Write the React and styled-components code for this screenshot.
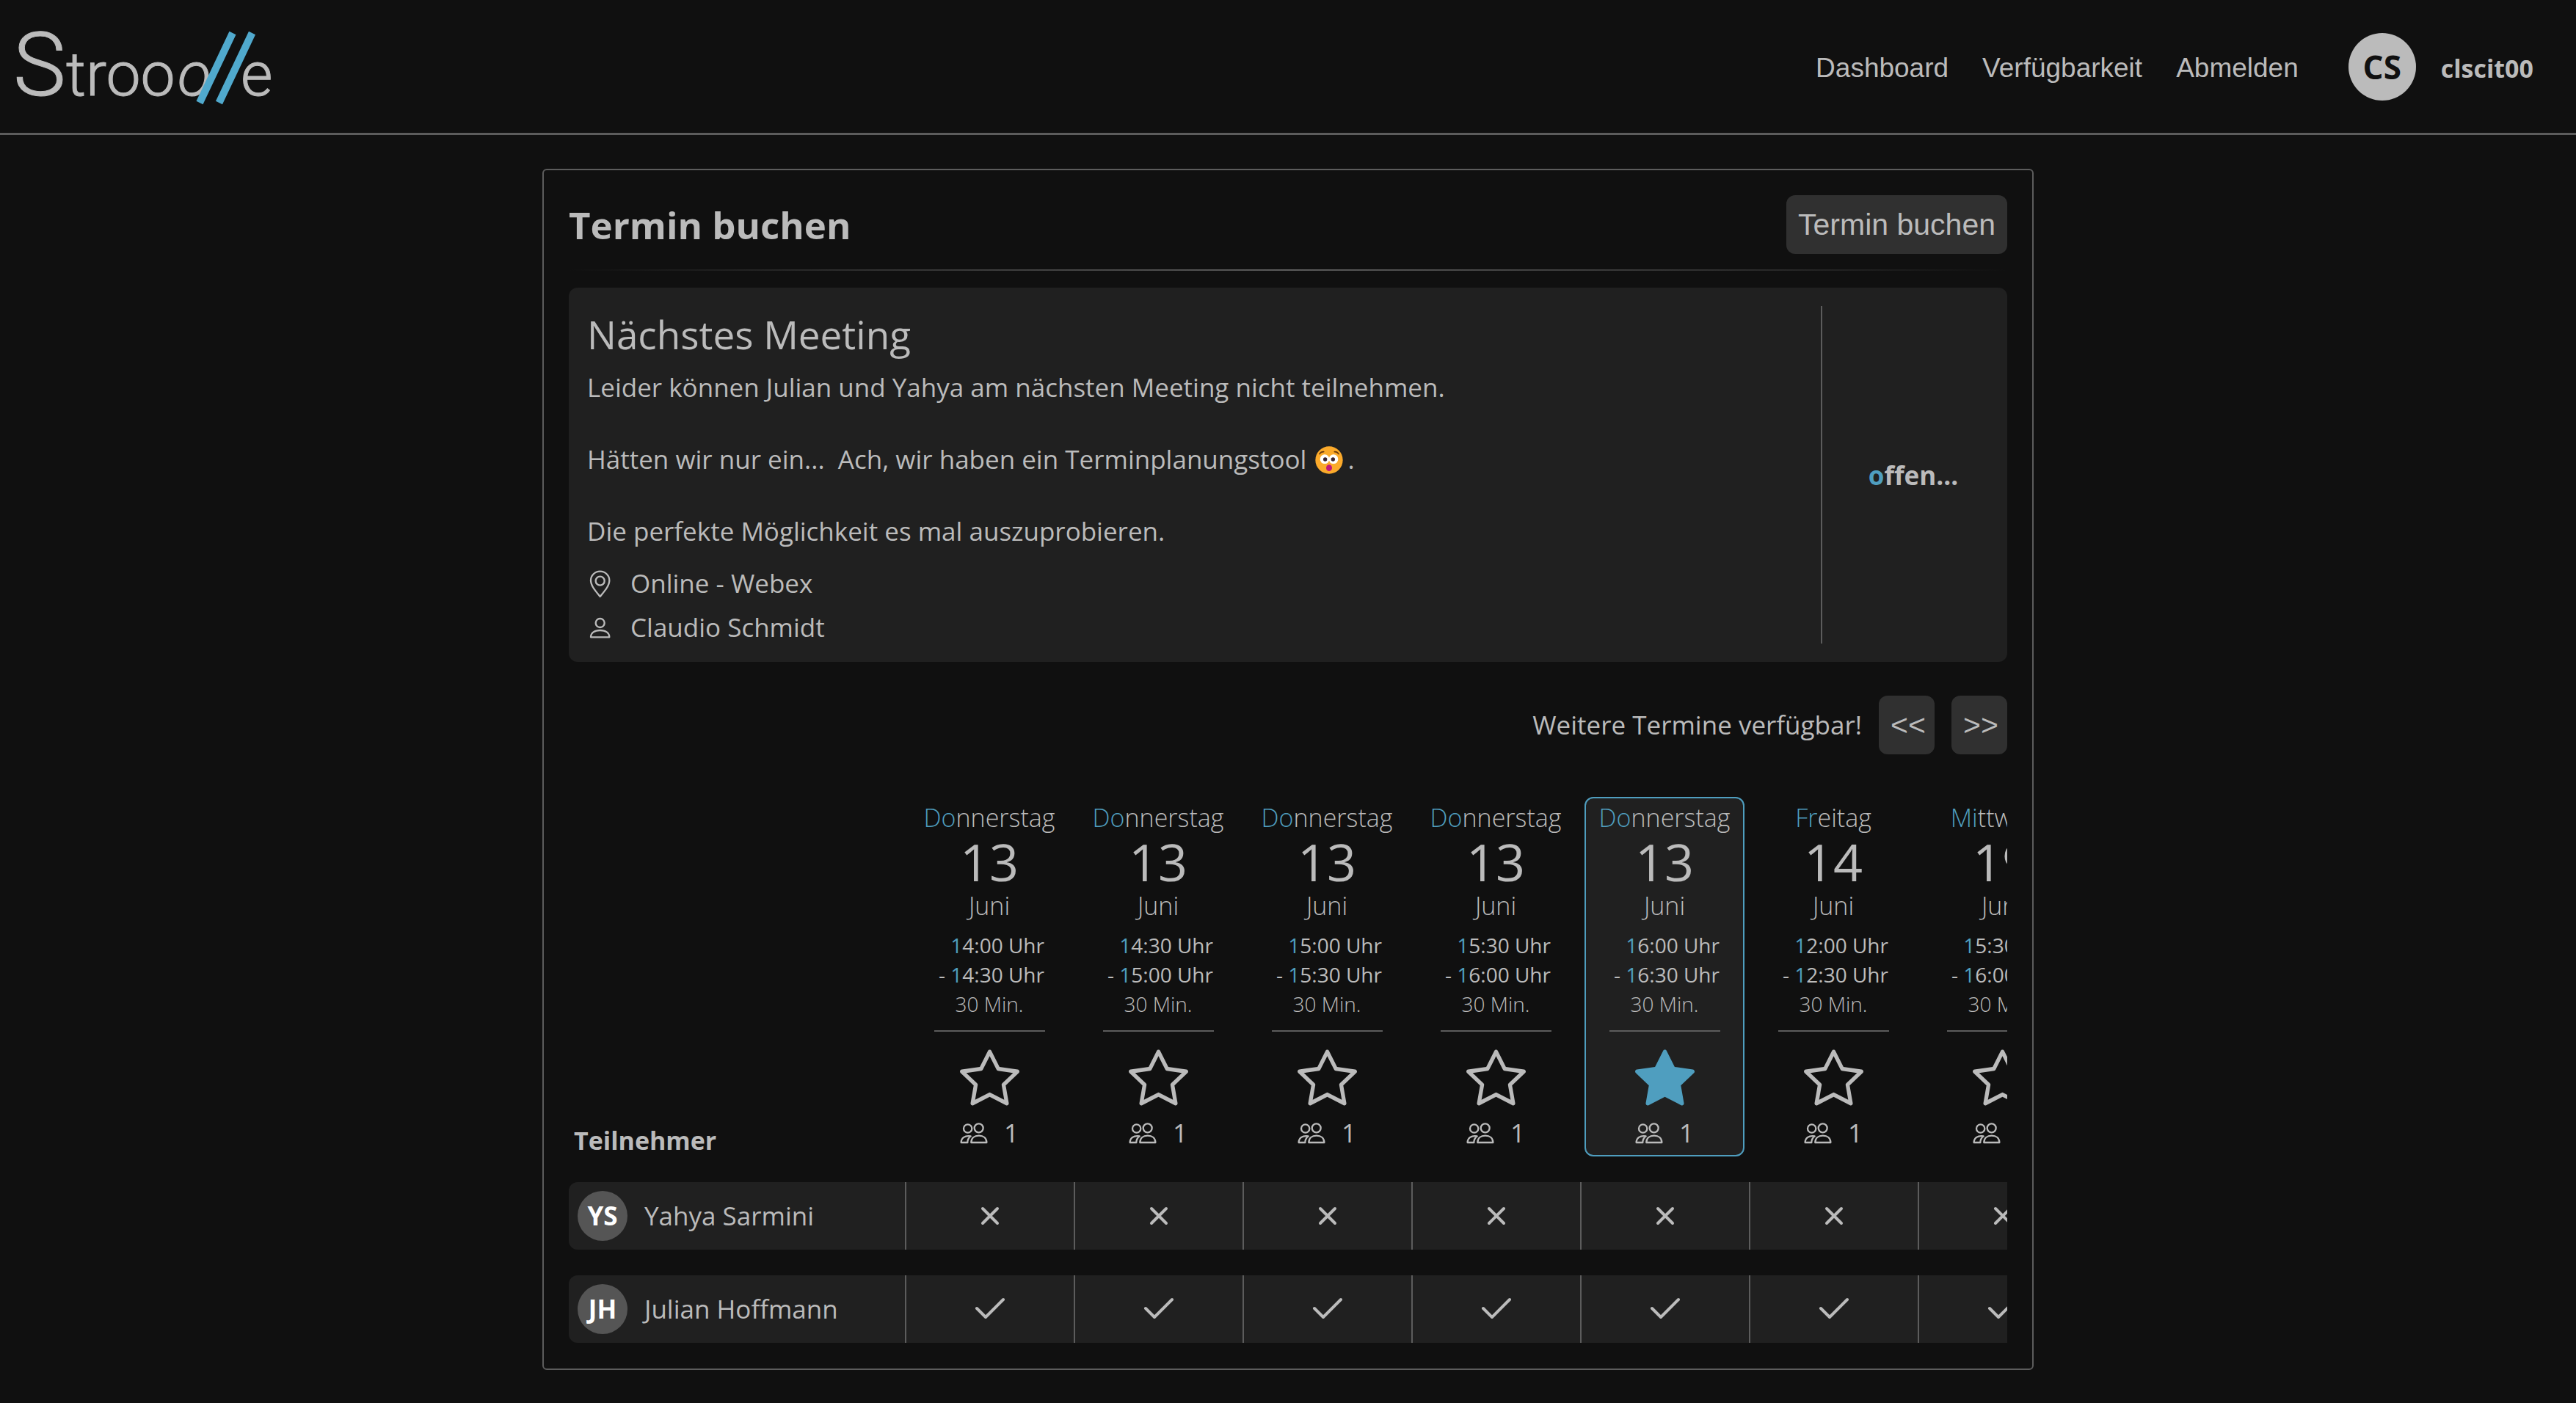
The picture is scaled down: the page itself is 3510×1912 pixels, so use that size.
import React, { useState } from "react";
import styled, { createGlobalStyle, css } from "styled-components";
import { BsStar, BsStarFill } from "react-icons/bs";

const color = {
  page: "#101010",
  panel: "#202020",
  control: "#303030",
  line: "#5c5c5c",
  avatar: "#555555",
  text: "#bbbbbb",
  accent: "#4f9ebf",
};

const GlobalStyle = createGlobalStyle`
  *, *::before, *::after { box-sizing: border-box; }
  body {
    margin: 0;
    background: ${color.page};
    color: ${color.text};
    font-family: "Open Sans", "Noto Sans", sans-serif;
    font-size: 35px;
    line-height: 40px;
  }
`;

const Header = styled.header`
  display: flex;
  align-items: center;
  justify-content: space-between;
  height: 184px;
  padding: 0 58px 0 20px;
  border-bottom: 3px solid ${color.line};
`;

const HomeLink = styled.a`
  display: block;
`;

const LogoSvg = styled.svg`
  display: block;
  overflow: visible;
`;

const LogoText = styled.text`
  font-family: Roboto, sans-serif;
  font-weight: 300;
  font-size: ${(p) => (p.$large ? 121 : 84)}px;
  font-style: ${(p) => (p.$slanted ? "italic" : "normal")};
  fill: ${color.text};
  stroke: ${color.text};
  stroke-width: 1;
`;

const Side = styled.div`
  display: flex;
  align-items: center;
`;

const Nav = styled.nav`
  display: flex;
  gap: 46px;
  padding-top: 4px;
  margin-right: 68px;
`;

const NavLink = styled.a`
  color: inherit;
  font-family: "Liberation Sans", Arial, sans-serif;
  font-size: 37px;
  text-decoration: none;
`;

const Avatar = styled.span`
  display: flex;
  flex: none;
  align-items: center;
  justify-content: center;
  border-radius: 50%;
  font-weight: 700;
  ${(p) =>
    p.$large
      ? css`
          width: 92px;
          height: 92px;
          background: ${color.text};
          color: ${color.page};
          font-size: 44px;
        `
      : css`
          width: 68px;
          height: 68px;
          background: ${color.avatar};
          color: #fff;
          font-size: 35px;
        `}
`;

const UserName = styled.strong`
  margin-left: 34px;
  padding-top: 4px;
  font-size: 34px;
`;

const Main = styled.main`
  display: flex;
  justify-content: center;
  padding: 46px 46px 40px;
`;

const Card = styled.section`
  width: 100%;
  max-width: 2032px;
  padding: 34px 34px 0;
  border: 2px solid ${color.line};
  border-radius: 6px;
`;

const CardHead = styled.div`
  display: flex;
  align-items: center;
  justify-content: space-between;
`;

const Title = styled.h1`
  margin: 0;
  font-size: 51px;
  font-weight: 700;
  line-height: 70px;
`;

const Button = styled.button`
  height: 80px;
  padding: 0 16px;
  border: 0;
  border-radius: 12px;
  background: ${color.control};
  color: inherit;
  font-family: "Liberation Sans", Arial, sans-serif;
  font-size: 41px;
  cursor: pointer;
`;

const FadeRule = styled.hr`
  height: 2px;
  margin: 21px 0 23px;
  border: 0;
  background: linear-gradient(to right, transparent, ${color.line}, transparent);
`;

const Details = styled.div`
  display: flex;
  padding: 25px 0 25px 25px;
  border-radius: 12px;
  background: ${color.panel};
`;

const Info = styled.div`
  flex: 1;
  padding-top: 4px;
`;

const MeetingTitle = styled.h2`
  margin: 0 0 12px;
  font-size: 53px;
  font-weight: 400;
  line-height: 70px;
`;

const Description = styled.p`
  margin: 0 0 24px;
  line-height: 49px;
  white-space: pre-wrap;
`;

const EmojiSvg = styled.svg`
  width: 38px;
  height: 38px;
  margin: 0 7px 0 2px;
  vertical-align: -7px;
`;

const MetaList = styled.ul`
  display: grid;
  gap: 15px;
  margin: 0;
  padding: 0;
  list-style: none;
`;

const MetaItem = styled.li`
  display: flex;
  align-items: center;
  gap: 23px;
  line-height: 45px;
`;

const LineIcon = styled.svg`
  width: ${(p) => p.$width}px;
  height: ${(p) => p.$height}px;
  overflow: visible;
  fill: none;
  stroke: currentColor;
  stroke-width: ${(p) => p.$stroke || 7};
  stroke-linecap: round;
  stroke-linejoin: round;
`;

const Status = styled.div`
  display: flex;
  align-items: center;
  justify-content: center;
  width: 254px;
  padding: 2px 4px 0 0;
  border-left: 2px solid ${color.line};
  font-weight: 700;
`;

const Accent = styled.span`
  color: ${color.accent};
`;

const Pager = styled.div`
  display: flex;
  align-items: center;
  justify-content: flex-end;
  gap: 23px;
  margin-top: 46px;
`;

const PagerButton = styled(Button)`
  width: 76px;
`;

const TableClip = styled.div`
  margin-top: 23px;
  overflow: hidden;
`;

const Table = styled.table`
  table-layout: fixed;
  width: 2068px;
  border-spacing: 0 35px;
`;

const NameHead = styled.th`
  width: 458px;
  padding: 0 0 2px 7px;
  font-size: 34px;
  text-align: left;
  vertical-align: bottom;
`;

const SlotHead = styled.th`
  width: 230px;
  padding: 0 6px;
  font-weight: 400;
`;

const Slot = styled.div`
  display: flex;
  flex-direction: column;
  align-items: center;
  height: 490px;
  padding-top: 6px;
  border: 2px solid ${(p) => (p.$selected ? color.accent : "transparent")};
  border-radius: 12px;
  background: ${(p) => (p.$selected ? color.panel : "transparent")};
`;

const Light = styled.span`
  font-size: 34px;
  font-weight: 300;
`;

const DayNumber = styled.span`
  font-size: 70px;
  line-height: 80px;
`;

const Times = styled.span`
  width: 150px;
  margin-top: 14px;
  font-size: 28px;
  text-align: right;
  white-space: nowrap;
`;

const Duration = styled(Light)`
  font-size: 28px;
`;

const SlotRule = styled.hr`
  width: 151px;
  height: 2px;
  margin: 16px 0 22px;
  border: 0;
  background: ${color.line};
`;

const StarButton = styled.button`
  display: block;
  height: 81px;
  margin-bottom: 15px;
  padding: 0;
  border: 0;
  background: none;
  color: ${(p) => (p.$selected ? color.accent : color.text)};
  font-size: 81px;
  line-height: 0;
  cursor: pointer;
`;

const Count = styled.span`
  display: flex;
  align-items: center;
  gap: 22px;
`;

const PersonHead = styled.th`
  height: 92px;
  padding: 0 12px;
  border-radius: 12px 0 0 12px;
  background: ${color.panel};
  font-weight: 400;
  text-align: left;
`;

const Person = styled.div`
  display: flex;
  align-items: center;
  gap: 23px;
`;

const Answer = styled.td`
  padding: 0;
  border-left: 2px solid ${color.line};
  background: ${color.panel};
  line-height: 0;
  text-align: center;
`;

function Logo() {
  return (
    <LogoSvg width="352" height="110" viewBox="20 36 352 110" role="img" aria-label="Stroodle">
      <LogoText $large x="18" y="130">S</LogoText>
      <LogoText x="90" y="130">troo</LogoText>
      <LogoText $slanted x="242" y="130">o</LogoText>
      <LogoText x="328" y="130">e</LogoText>
      <path d="M317 45 272 140M343.500 45 298.500 140" stroke="#50a9cd" strokeWidth="10" />
    </LogoSvg>
  );
}

function AstonishedFace() {
  return (
    <EmojiSvg viewBox="66 52 114 114" role="img" aria-label="😳">
      <circle cx="123" cy="109" r="56" fill="#fbaa2b" />
      <path d="M84 84q6-10 17-9M162 84q-6-10-17-9" fill="none" stroke="#6b3a10" strokeWidth="5" strokeLinecap="round" />
      <circle cx="105" cy="105" r="19" fill="#fff" />
      <circle cx="141" cy="105" r="19" fill="#fff" />
      <circle cx="107" cy="106" r="8" fill="#3a2430" />
      <circle cx="139" cy="106" r="8" fill="#3a2430" />
      <ellipse cx="123" cy="141" rx="12" ry="13" fill="#c2187a" />
    </EmojiSvg>
  );
}

const PinIcon = () => (
  <LineIcon $width={36} $height={36} viewBox="63 50 108 108" aria-hidden="true">
    <circle cx="116" cy="94" r="18" />
    <path d="M116 158C98 136 78 114 78 92a38 37 0 0 1 76 0c0 22-20 44-38 66Z" />
  </LineIcon>
);

const PersonIcon = () => (
  <LineIcon $width={36} $height={36} viewBox="63 230 108 108" aria-hidden="true">
    <circle cx="116" cy="266" r="18" />
    <path d="M78 324c0-18 16-28 38-28s38 10 38 28Z" />
  </LineIcon>
);

const PeopleIcon = () => (
  <LineIcon $width={38} $height={28} viewBox="56 337 114 84" aria-hidden="true">
    <circle cx="88" cy="361" r="17" />
    <circle cx="133" cy="359" r="18" />
    <path d="M102 418c0-18 13-28 31.500-28S165 400 165 418Z" />
    <path d="M100 392C76 388 61 400 61 418H87C87 407 92 398 100 392Z" />
  </LineIcon>
);

const CrossIcon = () => (
  <LineIcon $width={24} $height={24} $stroke={4} viewBox="0 0 24 24" role="img" aria-label="Nein">
    <path d="M2 2 22 22M22 2 2 22" />
  </LineIcon>
);

const CheckIcon = () => (
  <LineIcon $width={38} $height={28} $stroke={4} viewBox="0 0 38 28" role="img" aria-label="Ja">
    <path d="M1 13 13 25 37 1" />
  </LineIcon>
);

const slots = [
  { day: "Donnerstag", date: 13, from: "14:00", to: "14:30" },
  { day: "Donnerstag", date: 13, from: "14:30", to: "15:00" },
  { day: "Donnerstag", date: 13, from: "15:00", to: "15:30" },
  { day: "Donnerstag", date: 13, from: "15:30", to: "16:00" },
  { day: "Donnerstag", date: 13, from: "16:00", to: "16:30" },
  { day: "Freitag", date: 14, from: "12:00", to: "12:30" },
  { day: "Mittwoch", date: 19, from: "15:30", to: "16:00" },
];

const people = [
  { initials: "YS", name: "Yahya Sarmini", available: false },
  { initials: "JH", name: "Julian Hoffmann", available: true },
];

const Lead = ({ text, count }) => (
  <>
    <Accent>{text.slice(0, count)}</Accent>
    {text.slice(count)}
  </>
);

export default function App() {
  const [selected, setSelected] = useState(4);

  return (
    <>
      <GlobalStyle />
      <Header>
        <HomeLink href="#">
          <Logo />
        </HomeLink>
        <Side>
          <Nav>
            <NavLink href="#dashboard">Dashboard</NavLink>
            <NavLink href="#verfuegbarkeit">Verfügbarkeit</NavLink>
            <NavLink href="#abmelden">Abmelden</NavLink>
          </Nav>
          <Avatar $large>CS</Avatar>
          <UserName>clscit00</UserName>
        </Side>
      </Header>

      <Main>
        <Card>
          <CardHead>
            <Title>Termin buchen</Title>
            <Button type="button">Termin buchen</Button>
          </CardHead>
          <FadeRule />

          <Details>
            <Info>
              <MeetingTitle>Nächstes Meeting</MeetingTitle>
              <Description>
                {"Leider können Julian und Yahya am nächsten Meeting nicht teilnehmen.\n\n"}
                {"Hätten wir nur ein...  Ach, wir haben ein Terminplanungstool "}
                <AstonishedFace />
                {".\n\nDie perfekte Möglichkeit es mal auszuprobieren."}
              </Description>
              <MetaList>
                <MetaItem>
                  <PinIcon />
                  Online - Webex
                </MetaItem>
                <MetaItem>
                  <PersonIcon />
                  Claudio Schmidt
                </MetaItem>
              </MetaList>
            </Info>
            <Status>
              <span>
                <Lead text="offen..." count={1} />
              </span>
            </Status>
          </Details>

          <Pager>
            <span>Weitere Termine verfügbar!</span>
            <PagerButton type="button">&lt;&lt;</PagerButton>
            <PagerButton type="button">&gt;&gt;</PagerButton>
          </Pager>

          <TableClip>
            <Table>
              <thead>
                <tr>
                  <NameHead scope="col">Teilnehmer</NameHead>
                  {slots.map((slot, i) => (
                    <SlotHead key={i} scope="col">
                      <Slot $selected={i === selected}>
                        <Light>
                          <Lead text={slot.day} count={2} />
                        </Light>
                        <DayNumber>{slot.date}</DayNumber>
                        <Light>Juni</Light>
                        <Times>
                          <Lead text={slot.from} count={1} /> Uhr
                          <br />- <Lead text={slot.to} count={1} /> Uhr
                        </Times>
                        <Duration>30 Min.</Duration>
                        <SlotRule />
                        <StarButton
                          type="button"
                          aria-label="Termin auswählen"
                          aria-pressed={i === selected}
                          $selected={i === selected}
                          onClick={() => setSelected(i)}
                        >
                          {i === selected ? <BsStarFill /> : <BsStar />}
                        </StarButton>
                        <Count>
                          <PeopleIcon />1
                        </Count>
                      </Slot>
                    </SlotHead>
                  ))}
                </tr>
              </thead>
              <tbody>
                {people.map((person) => (
                  <tr key={person.name}>
                    <PersonHead scope="row">
                      <Person>
                        <Avatar>{person.initials}</Avatar>
                        {person.name}
                      </Person>
                    </PersonHead>
                    {slots.map((_, i) => (
                      <Answer key={i}>{person.available ? <CheckIcon /> : <CrossIcon />}</Answer>
                    ))}
                  </tr>
                ))}
              </tbody>
            </Table>
          </TableClip>
        </Card>
      </Main>
    </>
  );
}
